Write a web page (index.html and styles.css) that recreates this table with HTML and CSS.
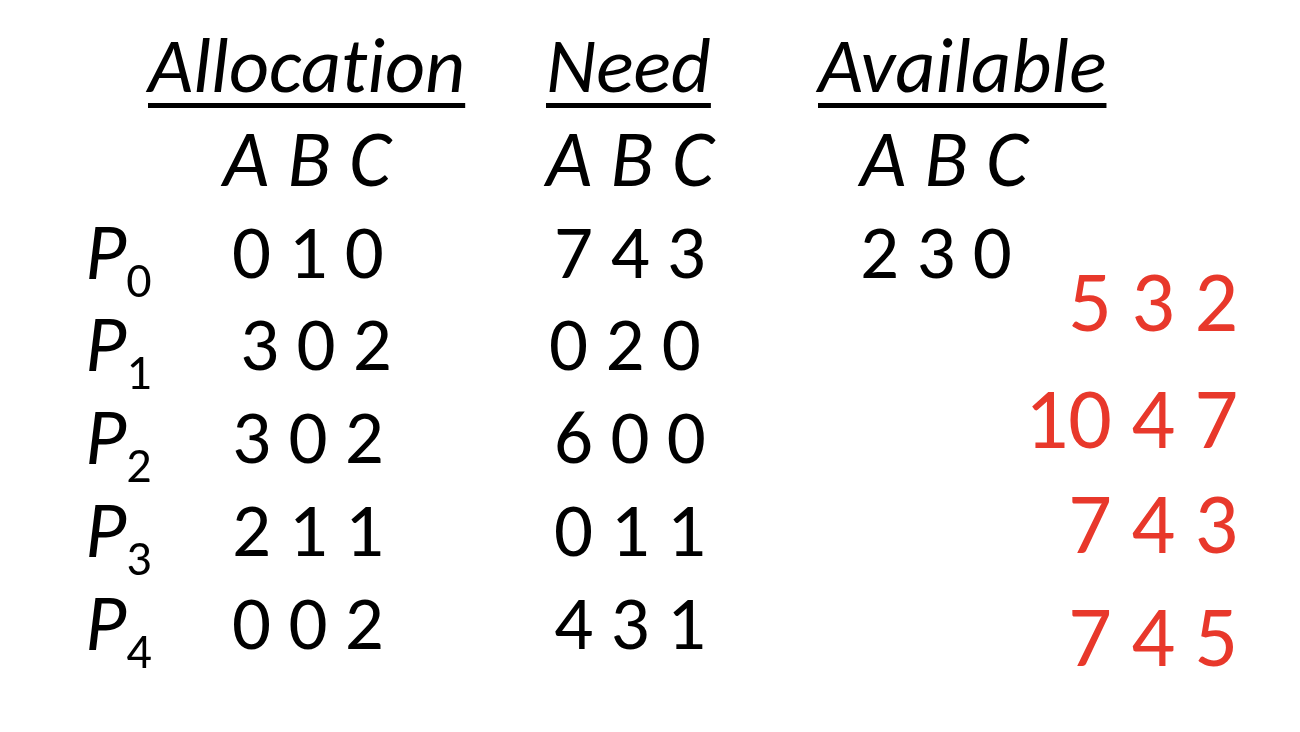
FILE: index.html
```html
<!DOCTYPE html>
<html>
<head>
<meta charset="utf-8">
<link rel="stylesheet" href="styles.css">
</head>
<body>
<div class="slide">
  <div class="table">
    <div class="cell lbl"></div>
    <div class="cell head h-alloc">Allocation</div>
    <div class="cell head h-need">Need</div>
    <div class="cell head h-avail">Available</div>

    <div class="cell lbl"></div>
    <div class="cell abc a-alloc">A B C</div>
    <div class="cell abc a-need">A B C</div>
    <div class="cell abc a-avail">A B C</div>

    <div class="cell lbl"><i>P</i><sub>0</sub></div>
    <div class="cell num n-alloc">0 1 0</div>
    <div class="cell num n-need">7 4 3</div>
    <div class="cell num n-avail">2 3 0</div>

    <div class="cell lbl"><i>P</i><sub>1</sub></div>
    <div class="cell num n-alloc shift">3 0 2</div>
    <div class="cell num n-need shift2">0 2 0</div>
    <div class="cell num n-avail"></div>

    <div class="cell lbl"><i>P</i><sub>2</sub></div>
    <div class="cell num n-alloc">3 0 2</div>
    <div class="cell num n-need">6 0 0</div>
    <div class="cell num n-avail"></div>

    <div class="cell lbl"><i>P</i><sub>3</sub></div>
    <div class="cell num n-alloc">2 1 1</div>
    <div class="cell num n-need">0 1 1</div>
    <div class="cell num n-avail"></div>

    <div class="cell lbl"><i>P</i><sub>4</sub></div>
    <div class="cell num n-alloc">0 0 2</div>
    <div class="cell num n-need">4 3 1</div>
    <div class="cell num n-avail"></div>
  </div>
  <div class="work">
    <div class="red r1">5 3 2</div>
    <div class="red r2">10 4 7</div>
    <div class="red r3">7 4 3</div>
    <div class="red r4">7 4 5</div>
  </div>
</div>
</body>
</html>
```

FILE: styles.css
```css
html, body {
  margin: 0;
  padding: 0;
  background: #ffffff;
}
body {
  width: 1300px;
  height: 732px;
  overflow: hidden;
  font-family: "Carlito", "Lato", "Liberation Sans", sans-serif;
  font-variant-ligatures: none;
  color: #000000;
}
.slide {
  display: flex;
  align-items: flex-start;
  padding-left: 85px;
  padding-top: 20px;
}
.table {
  display: grid;
  grid-template-columns: 63px 398px 272px 200px;
  grid-auto-rows: 92.8px;
}
.cell {
  font-size: 77px;
  line-height: 92.8px;
  white-space: nowrap;
}
.head {
  font-style: italic;
  font-size: 78px;
  text-decoration: underline;
  text-decoration-thickness: 5px;
  text-underline-offset: 11px;
}
.abc {
  font-style: italic;
  font-size: 80px;
}
.a-alloc { padding-left: 75px; }
.a-need { padding-left: 0; }
.a-avail { padding-left: 42px; }
.n-alloc { padding-left: 84px; }
.n-alloc.shift { padding-left: 92px; }
.n-need { padding-left: 8px; }
.n-need.shift2 { padding-left: 3px; }
.n-avail { padding-left: 42px; }
.lbl {
  font-size: 80px;
  grid-column: 1;
}
.lbl i {
  font-style: italic;
}
.lbl sub {
  font-size: 50px;
  vertical-align: -18px;
  line-height: 0;
  margin-left: 0;
}
.work {
  display: flex;
  flex-direction: column;
  align-items: flex-end;
  margin-left: auto;
  padding-right: 62px;
  padding-top: 232px;
}
.red {
  color: #e8382b;
  font-size: 86px;
  line-height: 100px;
  white-space: nowrap;
}
.r2 { margin-top: 17px; }
.r3 { margin-top: 5px; }
.r4 { margin-top: 13px; }
```
